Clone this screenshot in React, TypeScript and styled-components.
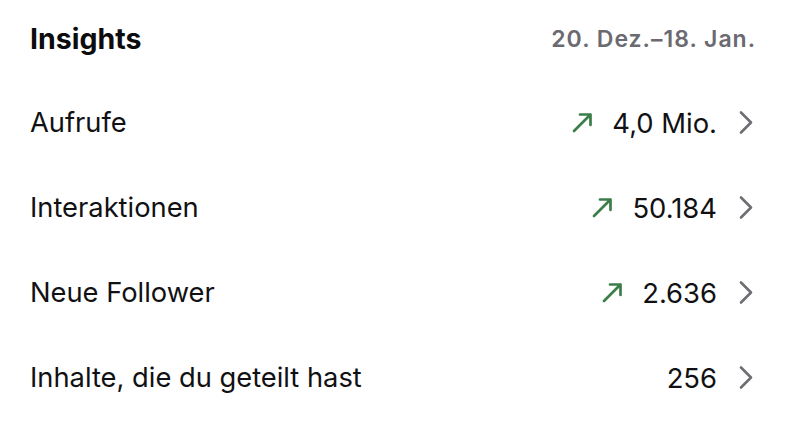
import React from 'react';
import styled, { createGlobalStyle } from 'styled-components';

const GlobalStyle = createGlobalStyle`
  html, body {
    margin: 0;
    padding: 0;
    background: #ffffff;
  }
  body {
    font-family: Inter, "Noto Sans", "Liberation Sans", sans-serif;
    -webkit-font-smoothing: antialiased;
  }
`;

const Page = styled.div`
  width: 787px;
  height: 437px;
  background: #ffffff;
  padding: 0 30px;
  box-sizing: border-box;
  overflow: hidden;
`;

const Header = styled.div`
  display: flex;
  justify-content: space-between;
  align-items: center;
  height: 80px;
  padding-bottom: 3px;
  box-sizing: border-box;
`;

const Title = styled.h1`
  margin: 0;
  font-size: 28.5px;
  font-weight: 700;
  color: #0c0c0e;
`;

const Range = styled.span`
  font-size: 23px;
  font-weight: 600;
  letter-spacing: 1px;
  color: #6a6a70;
  margin-right: 1px;
`;

const List = styled.div`
  display: flex;
  flex-direction: column;
`;

const Row = styled.div`
  display: flex;
  align-items: center;
  justify-content: space-between;
  height: 85px;
`;

const Label = styled.span`
  font-size: 27.3px;
  font-weight: 400;
  color: #111113;
`;

const Right = styled.div`
  display: flex;
  align-items: center;
`;

const Trend = styled.svg`
  width: 21px;
  height: 21px;
  margin-right: 19px;
`;

const Value = styled.span`
  font-size: 27.4px;
  font-weight: 400;
  color: #111113;
`;

const Chevron = styled.svg`
  width: 14px;
  height: 25px;
  margin-left: 22px;
  margin-right: 4px;
`;

type Metric = { label: string; value: string; up?: boolean };

const metrics: Metric[] = [
  { label: 'Aufrufe', value: '4,0 Mio.', up: true },
  { label: 'Interaktionen', value: '50.184', up: true },
  { label: 'Neue Follower', value: '2.636', up: true },
  { label: 'Inhalte, die du geteilt hast', value: '256' },
];

const App: React.FC = () => {
  return (
    <>
      <GlobalStyle />
      <Page>
        <Header>
          <Title>Insights</Title>
          <Range>20. Dez.–18. Jan.</Range>
        </Header>
        <List>
          {metrics.map((m) => (
            <Row key={m.label}>
              <Label>{m.label}</Label>
              <Right>
                {m.up && (
                  <Trend viewBox="0 0 21 21">
                    <path d="M2 19 L18.5 2.5 M8 2.5 H18.5 V13" fill="none" stroke="#3c7e49" strokeWidth="2.7" strokeLinecap="round" strokeLinejoin="round" />
                  </Trend>
                )}
                <Value>{m.value}</Value>
                <Chevron viewBox="0 0 14 25">
                  <path d="M2 2.5 L12 12.5 L2 22.5" fill="none" stroke="#6e6e73" strokeWidth="2.6" strokeLinecap="round" strokeLinejoin="round" />
                </Chevron>
              </Right>
            </Row>
          ))}
        </List>
      </Page>
    </>
  );
};

export default App;
